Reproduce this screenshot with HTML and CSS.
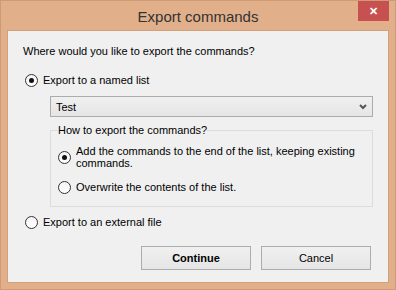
FILE: index.html
```html
<!DOCTYPE html>
<html lang="en">
<head>
    <meta charset="UTF-8">
    <title>Export commands</title>
    <link rel="stylesheet" href="styles.css">
</head>
<body>
    <div class="window">
        <!-- Title bar -->
        <div class="title-bar">
            <span class="title">Export commands</span>
            <span class="close-button">&#x2715;</span>
        </div>

        <!-- Dialog content -->
        <div class="client">
            <div class="question">Where would you like to export the commands?</div>

            <div class="radio-row first">
                <span class="radio checked"></span>
                <span>Export to a named list</span>
            </div>

            <div class="select-box">
                <span>Test</span>
                <svg class="select-arrow" width="8" height="6" viewBox="0 0 8 6">
                    <path d="M1 1 L4 4 L7 1" fill="none" stroke="#555" stroke-width="2"/>
                </svg>
            </div>

            <fieldset class="group">
                <legend>How to export the commands?</legend>
                <div class="radio-row group-row">
                    <span class="radio checked"></span>
                    <span class="wrap-text">Add the commands to the end of the list, keeping existing commands.</span>
                </div>
                <div class="radio-row group-row second">
                    <span class="radio"></span>
                    <span>Overwrite the contents of the list.</span>
                </div>
            </fieldset>

            <div class="radio-row external">
                <span class="radio"></span>
                <span>Export to an external file</span>
            </div>

            <div class="buttons">
                <button class="button default">Continue</button>
                <button class="button">Cancel</button>
            </div>
        </div>
    </div>
</body>
</html>
```

FILE: styles.css
```css
body {
    margin: 0;
    font-family: 'Liberation Sans', Arial, sans-serif;
    font-size: 11px;
    color: #000;
}

.window {
    width: 396px;
    height: 290px;
    box-sizing: border-box;
    background-color: #e1b08b;
    border: 1px solid #cd9c77;
    display: flex;
    flex-direction: column;
}

.title-bar {
    position: relative;
    height: 29px;
    display: flex;
    justify-content: center;
    align-items: center;
}
.title {
    font-size: 15px;
    color: #333;
    padding-top: 1px;
}
.close-button {
    position: absolute;
    top: 0;
    right: 6px;
    width: 31px;
    height: 20px;
    background-color: #c75050;
    color: #fff;
    font-size: 11px;
    font-weight: bold;
    display: flex;
    justify-content: center;
    align-items: center;
}

.client {
    flex: 1;
    margin: 0 6px 6px 6px;
    border: 1px solid #d1a17c;
    background-color: #f0f0f0;
    padding: 14px 16px 0 15px;
    display: flex;
    flex-direction: column;
}

.question {
    line-height: 13px;
}

.radio-row {
    display: flex;
    align-items: center;
    gap: 5px;
    line-height: 13px;
    padding-left: 2px;
}
.radio-row.first {
    margin-top: 16px;
}
.radio {
    flex: none;
    width: 11px;
    height: 11px;
    border: 1px solid #333;
    border-radius: 50%;
    background: linear-gradient(#f4f4f4, #fff);
    position: relative;
}
.radio.checked::after {
    content: "";
    position: absolute;
    left: 3px;
    top: 3px;
    width: 5px;
    height: 5px;
    border-radius: 50%;
    background-color: #111;
}

.select-box {
    margin: 9px 0 0 27px;
    width: 323px;
    height: 21px;
    box-sizing: border-box;
    border: 1px solid #acacac;
    background: linear-gradient(#f0f0f0, #e5e5e5);
    display: flex;
    align-items: center;
    justify-content: space-between;
    padding: 0 5px 0 5px;
}

.group {
    margin: 7px 0 0 27px;
    width: 323px;
    box-sizing: border-box;
    border: 1px solid #dcdcdc;
    padding: 0 4px 12px 7px;
}
.group legend {
    padding: 0;
    line-height: 13px;
}
.group-row {
    padding-left: 0;
    margin-top: 8px;
}
.group-row.second {
    margin-top: 12px;
}
.wrap-text {
    line-height: 12px;
}

.external {
    margin-top: 9px;
}

.buttons {
    display: flex;
    justify-content: flex-end;
    gap: 10px;
    margin-top: 17px;
    padding-right: 1px;
}
.button {
    width: 110px;
    height: 24px;
    border: 1px solid #adadad;
    background: linear-gradient(#f0f0f0, #e5e5e5);
    font-family: 'Liberation Sans', Arial, sans-serif;
    font-size: 11px;
    color: #000;
    padding: 0;
}
.button.default {
    font-weight: bold;
}
```
